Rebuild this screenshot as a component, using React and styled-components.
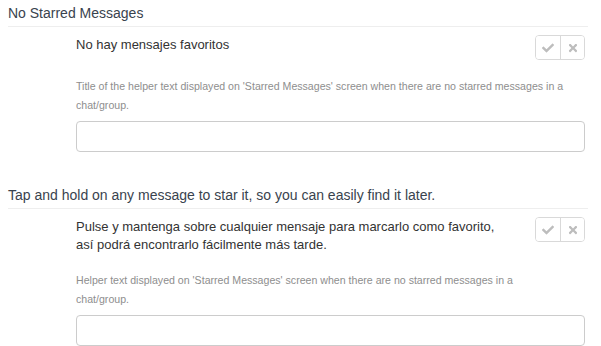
import React from "react";
import styled, { createGlobalStyle } from "styled-components";
import { FaCheck, FaTimes } from "react-icons/fa";

const GlobalStyle = createGlobalStyle`
  body {
    margin: 0;
    background: #fff;
    font-family: "Liberation Sans", Arial, sans-serif;
    color: #333;
  }
`;

const strings = [
  {
    key: "no_starred",
    source: "No Starred Messages",
    translation: "No hay mensajes favoritos",
    helper:
      "Title of the helper text displayed on 'Starred Messages' screen when there are no starred messages in a chat/group.",
  },
  {
    key: "starred_hint",
    source: "Tap and hold on any message to star it, so you can easily find it later.",
    translation:
      "Pulse y mantenga sobre cualquier mensaje para marcarlo como favorito, así podrá encontrarlo fácilmente más tarde.",
    helper:
      "Helper text displayed on 'Starred Messages' screen when there are no starred messages in a chat/group.",
  },
];

const App = () => {
  return (
    <>
      <GlobalStyle />
      <Page>
        {strings.map((s) => (
          <Entry key={s.key}>
            <Source>{s.source}</Source>
            <Body>
              <Row>
                <Translation>{s.translation}</Translation>
                <BtnGroup>
                  <IconBtn title="Accept">
                    <FaCheck />
                  </IconBtn>
                  <IconBtn title="Reject">
                    <FaTimes />
                  </IconBtn>
                </BtnGroup>
              </Row>
              <Helper>{s.helper}</Helper>
              <Input type="text" />
            </Body>
          </Entry>
        ))}
      </Page>
    </>
  );
};

export default App;

const Page = styled.div`
  width: 580px;
  padding-left: 8px;
`;

const Entry = styled.div`
  margin-bottom: 30px;
`;

const Source = styled.h3`
  margin: 0;
  padding: 3px 0;
  font-size: 14px;
  line-height: 20px;
  font-weight: normal;
  color: #39434e;
  border-bottom: 1px solid #eee;
`;

const Body = styled.div`
  padding: 8px 3px 0 68px;
`;

const Row = styled.div`
  display: flex;
  align-items: flex-start;
  justify-content: space-between;
`;

const Translation = styled.div`
  max-width: 425px;
  margin-top: 1px;
  font-size: 13px;
  line-height: 18px;
  color: #333;
`;

const BtnGroup = styled.div`
  display: flex;
  border: 1px solid #d9d9d9;
  border-radius: 4px;
  overflow: hidden;
`;

const IconBtn = styled.button`
  width: 24px;
  height: 23px;
  padding: 0;
  border: none;
  background: #fff;
  color: #bdbdbd;
  font-size: 12px;
  display: flex;
  align-items: center;
  justify-content: center;
  cursor: pointer;
  & + & {
    border-left: 1px solid #d9d9d9;
  }
`;

const Helper = styled.p`
  max-width: 489px;
  margin: 17px 0 0;
  font-size: 10.6px;
  line-height: 19px;
  color: #8e8e8e;
`;

const Input = styled.input`
  display: block;
  box-sizing: border-box;
  width: 100%;
  height: 31px;
  margin-top: 6px;
  border: 1px solid #ccc;
  border-radius: 4px;
  outline: none;
  font-family: inherit;
  font-size: 13px;
`;
